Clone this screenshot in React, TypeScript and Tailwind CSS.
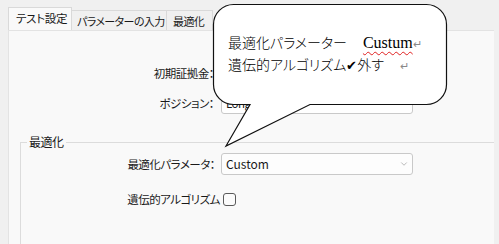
import { ChevronDown } from "lucide-react";

const ui = "font-['Noto_Sans_CJK_JP',sans-serif] [font-feature-settings:'palt']";

const App = () => {
  return (
    <div
      className={`relative w-[499px] h-[244px] overflow-hidden bg-[#f0f0f0] text-[11.5px] leading-[16px] tracking-[-0.5px] text-[#1a1a1a] ${ui}`}
    >
      {/* tabs */}
      <div className="flex items-end h-[30px] pl-[8px] text-[11px] tracking-[-0.6px]">
        <div className="h-[23px] w-[64px] pl-[7px] pt-[2px] bg-[#f9f9f9] border border-b-0 border-[#d9d9d9] text-[11.5px] tracking-[-0.3px]">
          テスト設定
        </div>
        <div className="h-[20px] w-[95px] pl-[5px] pt-[2px] bg-[#f0f0f0] border-t border-r border-[#d9d9d9] whitespace-nowrap">
          パラメーターの入力
        </div>
        <div className="h-[20px] w-[46px] pl-[6px] pt-[2px] bg-[#f0f0f0] border-t border-r border-[#d9d9d9]">
          最適化
        </div>
      </div>

      {/* panel */}
      <div className="ml-[8px] w-[486px] h-[214px] bg-[#f9f9f9] border-l border-t border-[#e3e3e3]">
        <div className="flex items-center h-[22px] mt-[31px]">
          <div className="w-[205px] text-right">初期証拠金：</div>
          <div className="ml-[7px] w-[192px] h-[22px] bg-white border border-[#c9c9c9] rounded-[3px]" />
        </div>
        <div className="flex items-center h-[22px] mt-[8px]">
          <div className="w-[205px] text-right">ポジション：</div>
          <div className="ml-[7px] w-[192px] h-[22px] bg-white border border-[#c9c9c9] rounded-[3px] pl-[4px] flex items-center">
            Long
          </div>
        </div>

        <fieldset className="ml-[11px] mt-[20px] h-[120px] border-t border-l border-[#dcdcdc]">
          <legend className="ml-[6px] px-[2px] leading-[16px] text-[12px]">最適化</legend>
          <div className="flex items-center h-[22px] mt-[3px]">
            <div className="w-[194px] text-right">最適化パラメータ：</div>
            <div className="ml-[6px] w-[192px] h-[22px] bg-[#fdfdfd] border border-[#c9c9c9] rounded-[3px] pl-[4px] pr-[3px] flex items-center justify-between text-[12px] tracking-normal">
              <span>Custom</span>
              <ChevronDown className="size-[10px] text-[#8a8a8a]" strokeWidth={1.4} />
            </div>
          </div>
          <div className="flex items-center h-[22px] mt-[13px]">
            <div className="w-[199px] text-right">遺伝的アルゴリズム</div>
            <div className="ml-[3px] w-[13px] h-[13px] rounded-[3px] border border-[#5a5a5a] bg-[#fbfbfb]" />
          </div>
        </fieldset>
      </div>

      {/* callout */}
      <svg
        className="absolute left-0 top-0 pointer-events-none"
        width="499"
        height="244"
        viewBox="0 0 499 244"
      >
        <path
          d="M 233.5 4.5 H 426.5 A 20 20 0 0 1 446.5 24.5 V 84.5 A 20 20 0 0 1 426.5 104.5 H 310 L 226 146 L 250 104.5 H 233.5 A 20 20 0 0 1 213.5 84.5 V 24.5 A 20 20 0 0 1 233.5 4.5 Z"
          fill="#ffffff"
          stroke="#111111"
          strokeWidth="1.2"
          strokeLinejoin="miter"
        />
      </svg>
      <div className="absolute left-[228px] top-[32px] text-[14px] leading-[21px] tracking-normal text-black font-['Liberation_Serif','Noto_Sans_CJK_JP',serif] font-light">
        <div className="flex items-baseline whitespace-nowrap">
          <span>最適化パラメーター</span>
          <span className="ml-[16px] text-[16px] underline decoration-wavy decoration-[#e02020] decoration-1 underline-offset-[3px]">
            Custum
          </span>
          <span className="text-[11px] text-[#888]">↵</span>
        </div>
        <div className="flex items-baseline whitespace-nowrap">
          <span>遺伝的アルゴリズム</span>
          <span className="font-['DejaVu_Sans',sans-serif] text-[13px]">✔</span>
          <span>外す</span>
          <span className="ml-[16px] text-[11px] text-[#888]">↵</span>
        </div>
      </div>
    </div>
  );
};

export default App;
